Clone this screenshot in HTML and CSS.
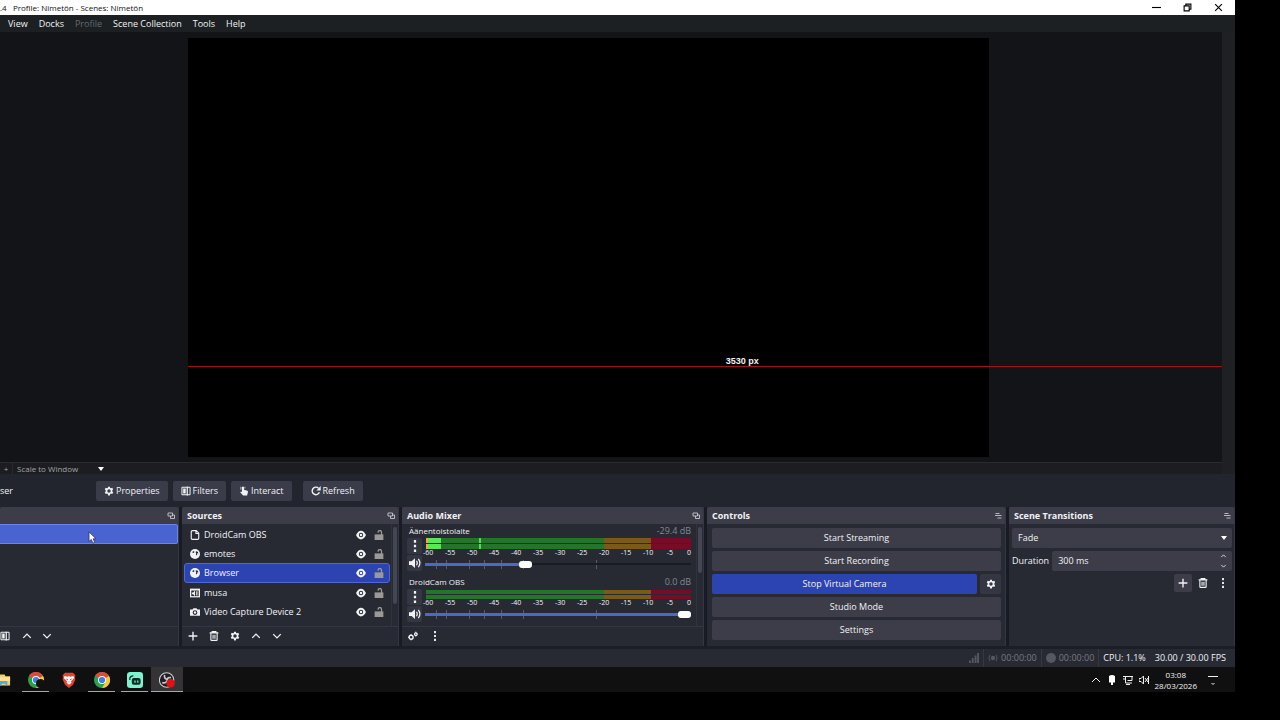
FILE: index.html
```html
<!DOCTYPE html>
<html lang="en">
<head>
<meta charset="utf-8">
<title>OBS Studio</title>
<link rel="stylesheet" href="styles.css">
</head>
<body>
<svg class="defs" aria-hidden="true">
  <symbol id="gear" viewBox="0 0 16 16"><path fill-rule="evenodd" fill="currentColor" d="M6.6 1h2.8l.5 2 1.2.6 2-.8 1.6 2.4-1.4 1.6v1.9l1.4 1.6-1.6 2.6-2-.8-1.3.7-.5 2.2H6.6l-.5-2.2-1.2-.7-2 .8-1.7-2.6 1.5-1.6V6.8L1.2 5.2l1.7-2.4 2 .8L6.1 3zM8 5.2a2.7 2.7 0 1 0 0 5.5 2.7 2.7 0 0 0 0-5.5z"/></symbol>
  <symbol id="filter" viewBox="0 0 16 16"><path fill="none" stroke="currentColor" stroke-width="1.6" d="M1.5 2h13v12h-13z"/><path fill="currentColor" d="M3.5 4h4v8h-4zM9 1h2v14H9z"/></symbol>
  <symbol id="hand" viewBox="0 0 16 16"><path fill="currentColor" d="M4.5 1.8Q6.2 0 8 1.8V6l5.5 1.6q1 .5.8 1.8L13 15H6.5L2 9.8l1-1.2 1.8 1zM2.5 1h1v5h-1zM9 1h1v3H9z"/></symbol>
  <symbol id="refresh" viewBox="0 0 16 16"><path fill="none" stroke="currentColor" stroke-width="2.2" d="M13.5 10A6 6 0 1 1 12 3.5"/><path fill="currentColor" d="M15.5 0v7H8.8z"/></symbol>
  <symbol id="float" viewBox="0 0 16 16"><path fill="none" stroke="currentColor" stroke-width="1.6" d="M2 2h9v6H2zM7 8v5h8V6h-4"/></symbol>
  <symbol id="float2" viewBox="0 0 16 16"><path fill="none" stroke="currentColor" stroke-width="1.6" d="M3 3h8M2 7h13M7 12h8"/></symbol>
  <symbol id="up" viewBox="0 0 16 16"><path fill="none" stroke="currentColor" stroke-width="2.2" d="M2 11l6-6 6 6"/></symbol>
  <symbol id="down" viewBox="0 0 16 16"><path fill="none" stroke="currentColor" stroke-width="2.2" d="M2 5l6 6 6-6"/></symbol>
  <symbol id="plus" viewBox="0 0 16 16"><path stroke="currentColor" stroke-width="2.2" d="M8 1v14M1 8h14"/></symbol>
  <symbol id="trash" viewBox="0 0 16 16"><path fill="none" stroke="currentColor" stroke-width="1.8" d="M1 3h14M5 3V1h6v2M3 3v11q0 1 1 1h8q1 0 1-1V3M6.5 6v6.500M9.500 6v6.500"/></symbol>
  <symbol id="dots" viewBox="0 0 16 16"><path fill="currentColor" d="M6.500 0h3v3.500h-3zM6.500 6.200h3v3.500h-3zM6.500 12.500h3V16h-3z"/></symbol>
  <symbol id="gears" viewBox="0 0 16 16"><circle cx="5" cy="10" r="3.200" fill="none" stroke="currentColor" stroke-width="2.200"/><circle cx="12.500" cy="5" r="2" fill="none" stroke="currentColor" stroke-width="2"/><path stroke="currentColor" stroke-width="1.500" d="M0 10h2M5 5v2M5 13v2M12.500 1v2M12.500 7v2M15 5h1"/></symbol>
  <symbol id="page" viewBox="0 0 16 16"><path fill="none" stroke="currentColor" stroke-width="1.800" d="M4 1h6l4 4v8q0 2-2 2H4q-2 0-2-2V3q0-2 2-2zM9.500 1.500v4h4"/></symbol>
  <symbol id="globe" viewBox="0 0 16 16"><circle cx="8" cy="8" r="8" fill="currentColor"/><path fill="#272a33" d="M4 4.500l2.500-1.500.5 2-1.500 1.500-1.500-.5zM9.500 3.500l3 1 1 2.500-1.500-.5-.7 3-1.300 1-.5-2.500.5-1.500-1-1z"/></symbol>
  <symbol id="media" viewBox="0 0 16 16"><path fill="currentColor" d="M0 1h16v14H0z"/><path fill="#272a33" d="M2 4h12v9H2z"/><path fill="currentColor" d="M3 7h2l3-3v9L5 10H3zM9.500 5h1.300v7H9.500zM12 5h1v7h-1z"/></symbol>
  <symbol id="camera" viewBox="0 0 16 16"><path fill="currentColor" fill-rule="evenodd" d="M0 4h4l1.500-2h5L12 4h4v10H0zM8 5a3.800 3.800 0 1 0 0 7.600A3.800 3.800 0 0 0 8 5z"/><circle cx="8" cy="8.800" r="1.900" fill="currentColor"/></symbol>
  <symbol id="eye" viewBox="0 0 16 16"><path fill="currentColor" fill-rule="evenodd" d="M0 8Q3.500 1 8 1T16 8q-3.500 7-8 7T0 8zm8-3.500a3.500 3.500 0 1 0 0 7 3.500 3.500 0 0 0 0-7z"/><circle cx="8" cy="8" r="2" fill="currentColor"/></symbol>
  <symbol id="lock" viewBox="0 0 16 16"><path fill="currentColor" d="M1 7h14v9H1z"/><path fill="none" stroke="currentColor" stroke-width="2" d="M12 8V3.500a2.700 2.700 0 0 0-5.400 0v1"/></symbol>
  <symbol id="speaker" viewBox="0 0 16 16"><path fill="currentColor" d="M0 5.500h3.500L8 1.500v13L3.500 10.500H0z"/><path fill="none" stroke="currentColor" stroke-width="1.700" d="M10 5q2 3 0 6M12.500 2.500q4 5.500 0 11"/></symbol>
  <symbol id="chrome" viewBox="0 0 20 20"><circle cx="10" cy="10" r="10" fill="#2da04c"/><path fill="#e0483a" d="M10 10L1.300 5A10 10 0 0 1 18.700 5z"/><path fill="#f7ca33" d="M10 10l8.700-5A10 10 0 0 1 10 20l3.500-6z"/><circle cx="10" cy="10" r="5" fill="#fff"/><circle cx="10" cy="10" r="3.900" fill="#3e7fe0"/></symbol>
</svg>

<main class="desktop">
  <header class="titlebar">
    <span>.4 &nbsp; Profile: Nimetön - Scenes: Nimetön</span>
    <div class="winbtns">
      <button aria-label="Minimize"><svg viewBox="0 0 8 8"><path d="M0 4h8"/></svg></button>
      <button aria-label="Restore"><svg viewBox="0 0 8 8"><path d="M1 2.500h4.500v4.500H1zM2.500 2.500V1H7v4.500H5.500"/></svg></button>
      <button aria-label="Close"><svg viewBox="0 0 8 8"><path d="M1 1l6 6M7 1L1 7"/></svg></button>
    </div>
  </header>
  <nav class="menu">
    <button>View</button><button>Docks</button><button disabled>Profile</button><button>Scene Collection</button><button>Tools</button><button>Help</button>
  </nav>

  <section class="preview">
    <div class="stage">
      <div class="canvas"></div>
      <div class="guide"><span>3530 px</span></div>
    </div>
  </section>
  <div class="scalebar"><button class="zoomin" aria-label="Zoom in">+</button><button class="scale">Scale to Window<i class="caret"></i></button></div>

  <div class="context">
    <span class="srcname">ser</span>
    <button><svg><use href="#gear"/></svg>Properties</button>
    <button><svg><use href="#filter"/></svg>Filters</button>
    <button><svg><use href="#hand"/></svg>Interact</button>
    <button class="apart"><svg><use href="#refresh"/></svg>Refresh</button>
  </div>

  <div class="docks">
    <section class="dock">
      <h2><span></span><svg><use href="#float"/></svg></h2>
      <div class="body scenes">
        <button class="scene" aria-label="Current scene"></button>
        <svg class="cursor" viewBox="0 0 10 15"><path fill="#fff" stroke="#1b2350" stroke-width=".8" d="M1 1v11l2.600-2.300L5.500 14l2-1-1.800-4H9z"/></svg>
      </div>
      <footer class="tools">
        <button aria-label="Filters"><svg><use href="#filter"/></svg></button><button aria-label="Up"><svg><use href="#up"/></svg></button><button aria-label="Down"><svg><use href="#down"/></svg></button>
      </footer>
    </section>

    <section class="dock">
      <h2><span>Sources</span><svg><use href="#float"/></svg></h2>
      <div class="body scroll">
        <ul class="sources">
          <li><svg><use href="#page"/></svg><span>DroidCam OBS</span><svg><use href="#eye"/></svg><svg class="lock"><use href="#lock"/></svg></li>
          <li><svg><use href="#globe"/></svg><span>emotes</span><svg><use href="#eye"/></svg><svg class="lock"><use href="#lock"/></svg></li>
          <li class="sel"><svg><use href="#globe"/></svg><span>Browser</span><svg><use href="#eye"/></svg><svg class="lock"><use href="#lock"/></svg></li>
          <li><svg><use href="#media"/></svg><span>musa</span><svg><use href="#eye"/></svg><svg class="lock"><use href="#lock"/></svg></li>
          <li><svg><use href="#camera"/></svg><span>Video Capture Device 2</span><svg><use href="#eye"/></svg><svg class="lock"><use href="#lock"/></svg></li>
        </ul>
        <div class="bar"><i class="thumb long"></i></div>
      </div>
      <footer class="tools src">
        <button aria-label="Add"><svg><use href="#plus"/></svg></button><button aria-label="Remove"><svg><use href="#trash"/></svg></button><button aria-label="Properties"><svg><use href="#gear"/></svg></button><button aria-label="Up"><svg><use href="#up"/></svg></button><button aria-label="Down"><svg><use href="#down"/></svg></button>
      </footer>
    </section>

    <section class="dock">
      <h2><span>Audio Mixer</span><svg><use href="#float"/></svg></h2>
      <div class="body scroll">
        <div class="channels">
          <div class="channel">
            <div class="chhead"><label for="v1">Äänentoistolaite</label><span>-29.4 dB</span></div>
            <div class="chbody">
              <div class="chbtns"><button aria-label="Options"><svg><use href="#dots"/></svg></button><button aria-label="Mute"><svg><use href="#speaker"/></svg></button></div>
              <div class="levels">
                <div class="meter live"><i></i><i></i></div>
                <div class="marks"><span>-60</span><span>-55</span><span>-50</span><span>-45</span><span>-40</span><span>-35</span><span>-30</span><span>-25</span><span>-20</span><span>-15</span><span>-10</span><span>-5</span><span>0</span></div>
                <input class="vol v1" id="v1" type="range" min="0" max="100" value="37">
              </div>
            </div>
          </div>
          <div class="channel">
            <div class="chhead"><label for="v2">DroidCam OBS</label><span>0.0 dB</span></div>
            <div class="chbody">
              <div class="chbtns"><button aria-label="Options"><svg><use href="#dots"/></svg></button><button aria-label="Mute"><svg><use href="#speaker"/></svg></button></div>
              <div class="levels">
                <div class="meter"><i></i><i></i></div>
                <div class="marks"><span>-60</span><span>-55</span><span>-50</span><span>-45</span><span>-40</span><span>-35</span><span>-30</span><span>-25</span><span>-20</span><span>-15</span><span>-10</span><span>-5</span><span>0</span></div>
                <input class="vol v2" id="v2" type="range" min="0" max="100" value="100">
              </div>
            </div>
          </div>
        </div>
        <div class="bar"><i class="thumb"></i></div>
      </div>
      <footer class="tools mix">
        <button aria-label="Advanced audio"><svg><use href="#gears"/></svg></button><button aria-label="More"><svg><use href="#dots"/></svg></button>
      </footer>
    </section>

    <section class="dock">
      <h2><span>Controls</span><svg><use href="#float2"/></svg></h2>
      <div class="body controls">
        <button>Start Streaming</button>
        <button>Start Recording</button>
        <div class="vcam"><button class="on">Stop Virtual Camera</button><button aria-label="Camera settings"><svg><use href="#gear"/></svg></button></div>
        <button>Studio Mode</button>
        <button>Settings</button>
      </div>
    </section>

    <section class="dock">
      <h2><span>Scene Transitions</span><svg><use href="#float2"/></svg></h2>
      <div class="body trans">
        <div class="field"><select aria-label="Transition"><option>Fade</option></select><i class="caret"></i></div>
        <div class="duration"><label for="dur">Duration</label>
          <div class="field"><input id="dur" type="text" value="300 ms"><span class="spin"><svg><use href="#up"/></svg><svg><use href="#down"/></svg></span></div>
        </div>
        <div class="tbtns"><button class="add" aria-label="Add"><svg><use href="#plus"/></svg></button><button aria-label="Remove"><svg><use href="#trash"/></svg></button><button aria-label="More"><svg><use href="#dots"/></svg></button></div>
      </div>
    </section>
  </div>

  <div class="status">
    <span class="dim"><svg viewBox="0 0 16 16"><path fill="currentColor" d="M0 12h3v4H0zM4.500 8h3v8h-3zM9 4h3v12H9zM13 0h3v16h-3z"/></svg></span>
    <span class="dim sep"><svg viewBox="0 0 16 16"><circle cx="8" cy="8" r="3.500" fill="currentColor"/><path fill="none" stroke="currentColor" stroke-width="1.500" d="M3 3q-3 5 0 10M13 3q3 5 0 10"/></svg>00:00:00</span>
    <span class="dim sep"><svg viewBox="0 0 16 16"><circle cx="8" cy="8" r="8" fill="currentColor"/></svg>00:00:00</span>
    <span class="sep">CPU: 1.1%</span>
    <span class="fps">30.00 / 30.00 FPS</span>
  </div>

  <div class="taskbar">
    <div class="apps">
      <button class="files" aria-label="File Explorer"><svg viewBox="0 0 12 16"><path fill="#f4cf69" d="M0 2h5l1 2h5v10H0z"/><path fill="#fbe49a" d="M0 5h11v4H0z"/><path fill="#5aa6e0" d="M0 9h8v5H6v-2H2v2H0z"/></svg></button>
      <button class="open" aria-label="Chrome profile"><svg><use href="#chrome"/></svg><i class="avatar"></i></button>
      <button aria-label="Brave"><svg viewBox="0 0 20 20"><path fill="#e5442c" d="M5 1h10l3 3-.5 3 .5 2-3 7-5 4-5-4-3-7 .5-2L2 4z"/><path fill="#fff" d="M4.500 5l4 .8L10 5l1.500.8 4-.8 1 2.500-4 4 .5 2L10 16l-3-2.500.5-2-4-4z"/><path fill="#e5442c" d="M6 8l3 1-1 1.500zM14 8l-3 1 1 1.500zM9 12h2l-1 1.500z"/></svg></button>
      <button class="open" aria-label="Chrome"><svg><use href="#chrome"/></svg></button>
      <button class="open" aria-label="Streamlabs"><svg viewBox="0 0 20 20"><rect width="20" height="20" rx="4" fill="#7cf5cf"/><rect x="6" y="7.500" width="11" height="8.500" rx="2.500" fill="#0c2a26"/><path fill="none" stroke="#0c2a26" stroke-width="1.500" d="M3.500 10V8.500Q3.500 5 8 4.800"/><path stroke="#7cf5cf" stroke-width="1.500" d="M10 10.500v3M13.500 10.500v3"/></svg></button>
      <button class="open active" aria-label="OBS Studio"><svg viewBox="0 0 20 20"><circle cx="9.500" cy="10" r="9" fill="#202024" stroke="#cfcfd2" stroke-width="1.300"/><path fill="none" stroke="#c8c8cc" stroke-width="2" d="M7 3.500q-1 4.500 3 5.500M4 13q5 2 6.500-3M15 7q-4-1-5 3"/><circle cx="14.500" cy="14" r="5.300" fill="#e01212"/></svg></button>
    </div>
    <div class="tray">
      <svg viewBox="0 0 10 10"><path d="M1 7l4-4 4 4"/></svg>
      <svg viewBox="0 0 10 10"><path fill="#fff" stroke="none" d="M2 1Q5-1 8 1v6.500H6V10H4V7.500H2z"/></svg>
      <svg viewBox="0 0 10 10"><path d="M0 1.500h10M2.500 1.500v6.500H9M0 4h2.500M4.500 5.500H9V1.500M3 9.500h4"/></svg>
      <svg viewBox="0 0 10 10"><path d="M0 3.500h2L4.500 1v8L2 6.500H0zM6 3l3 4M9 3L6 7M9.500 1v8"/></svg>
      <time>03:08<br>28/03/2026</time>
      <svg viewBox="0 0 10 10"><path d="M0 1.500h10M3.500 8L5 9.500 6.500 8"/></svg>
    </div>
  </div>
</main>
</body>
</html>
```
FILE: styles.css
```css
* { box-sizing: border-box; }
body {
  margin: 0;
  background: #000;
  color: #f2f2f5;
  font: 9px/12px "Open Sans", "Noto Sans", sans-serif;
}
button, input, select { font: inherit; color: inherit; border: 0; margin: 0; padding: 0; background: none; }
svg { display: block; flex: none; width: 10px; height: 10px; }
.defs { position: absolute; width: 0; height: 0; }

.desktop {
  display: flex;
  flex-direction: column;
  min-height: 100vh;
  padding: 0 45px 28px 0;
  overflow: hidden;
}

.titlebar { display: flex; justify-content: space-between; align-items: center; height: 15px; background: #fff; color: #111; font-size: 8px; }
.winbtns { display: flex; gap: 22px; padding-right: 12px; }
.winbtns svg { width: 9px; height: 9px; fill: none; stroke: #000; stroke-width: 1; }

.menu { display: flex; gap: 11px; height: 17px; padding-left: 8px; background: #1c2023; }
.menu button:disabled { color: #66686e; }

.preview { display: flex; flex: 1; min-height: 300px; padding-right: 13px; background: #1e2024; }
.stage {
  position: relative;
  display: grid;
  grid-template-columns: 188fr 801fr 233fr;
  flex: 1;
  padding: 6px 0 5px;
  background: #131418;
}
.canvas { grid-column: 2; background: #000; }
.guide { position: absolute; left: 15.4%; right: 0; top: 334px; height: 1px; background: #a01418; }
.guide span { position: absolute; left: 52%; bottom: 1px; font: bold 9px/10px "Liberation Sans", sans-serif; white-space: nowrap; }

.scalebar { display: flex; height: 12px; margin-right: 13px; border-top: 1px solid #292b30; background: #1b1d21; box-shadow: 13px 0 #1e2024; color: #a2a4aa; font-size: 8px; line-height: 10px; }
.zoomin { width: 13px; border-right: 1px solid #292b30; }
.scale { display: flex; align-items: center; justify-content: space-between; width: 91px; padding-left: 4px; }
.caret { width: 0; height: 0; border: 3px solid transparent; border-top: 4px solid #fff; border-bottom: 0; }

.context { display: flex; align-items: center; gap: 5px; height: 33px; background: #22252e; }
.srcname { width: 91px; }
.context button {
  display: flex;
  align-items: center;
  gap: 2px;
  height: 20px;
  padding: 0 8px;
  border-radius: 2px;
  background: #3a3c49;
}
.context .apart { margin-left: 6px; }

.docks {
  display: grid;
  grid-template-columns: 179fr 217fr 302fr 299fr 226fr;
  gap: 3px;
  height: 139px;
  background: #191b24;
}
.dock { display: flex; flex-direction: column; min-width: 0; background: #272a33; border-right: 1px solid #343743; }
.dock h2 {
  display: flex;
  justify-content: space-between;
  align-items: center;
  height: 17px;
  margin: 0;
  padding: 0 3px 0 5px;
  border-radius: 2px 2px 0 0;
  background: #3c3d49;
  font-size: 9px;
  font-weight: 700;
}
.dock h2 svg { width: 8px; height: 8px; color: #d8d8de; }
.body { position: relative; flex: 1; min-height: 0; }
.tools { display: flex; align-items: center; gap: 10px; height: 21px; padding-bottom: 3px; border-top: 1px solid #343743; }
.scenes + .tools button:first-child { margin-right: 2px; }
.tools.src { gap: 11px; padding-left: 6px; }
.tools.mix { gap: 12px; padding-left: 6px; }

.scene { display: block; width: 100%; height: 20px; border: 1px solid #6c84ea; border-left: 0; border-radius: 0 2px 2px 0; background: #4964d0; }
.cursor { position: absolute; left: 88px; top: 7px; width: 9px; height: 13px; }

.scroll { display: flex; overflow: hidden; }
.bar { width: 7px; padding: 3px 2px 0 1px; border-left: 1px solid #30333d; }
.thumb { display: block; width: 4px; height: 46px; border-radius: 2px; background: #434653; }
.thumb.long { height: 77px; }

.sources { flex: 1; margin: 0; padding: 1px 1px 0 2px; list-style: none; }
.sources li { display: flex; align-items: center; gap: 8px; height: 19px; padding: 0 5px; border: 1px solid transparent; }
.sources li.sel { height: 20px; border-color: #5068d0; border-radius: 3px; background: #2c44b2; }
.sources span { flex: 1; margin-left: -4px; white-space: nowrap; }
.sources .lock { color: #9b9996; }

.channels { flex: 1; padding: 0 1px 0 5px; }
.channel { height: 51px; }
.chhead { display: flex; justify-content: space-between; padding: 0 4px 0 2px; font-size: 8px; line-height: 14px; }
.chhead span { color: #85878f; font-size: 9px; }
.chbody { display: flex; gap: 3px; }
.chbtns { display: flex; flex-direction: column; gap: 1px; }
.chbtns button { display: grid; place-items: center; width: 15px; height: 16px; border-radius: 2px; background: #343742; }
.chbtns button svg { width: 12px; height: 12px; }
.levels { flex: 1; min-width: 0; padding-right: 4px; }
.meter { display: grid; gap: 1px; margin-left: 1px; padding-top: 1px; }
.meter i { height: 4px; background: linear-gradient(90deg, #24752a 67%, #7a5a18 67% 85%, #780c28 85%); }
.live { padding-top: 0; }
.live i {
  height: 5px;
  background:
    linear-gradient(#e0b050, #e0b050) 0 0 / 2px 100% no-repeat,
    linear-gradient(#58e858, #58e858) 2px 0 / 13px 100% no-repeat,
    linear-gradient(#50e050, #50e050) 53px 0 / 2px 100% no-repeat,
    linear-gradient(90deg, #24752a 67%, #7a5a18 67% 85%, #780c28 85%);
}
.marks { display: flex; justify-content: space-between; height: 8px; margin-left: -2px; font-size: 7px; line-height: 8px; }
.marks span { display: flex; justify-content: center; width: 10px; }
.marks span:last-child { justify-content: flex-end; width: 4px; }
.vol {
  appearance: none;
  display: block;
  width: 100%;
  height: 14px;
  background:
    linear-gradient(#4d69c4, #4d69c4) 0 6px / var(--fill) 3px no-repeat,
    linear-gradient(#191b24, #191b24) 0 6px / 100% 2px no-repeat,
    linear-gradient(90deg, transparent 11px, #555b70 11px 12px, transparent 12px 21px, #555b70 21px 22px, transparent 22px 44px, #555b70 44px 45px, transparent 45px 59px, #555b70 59px 60px, transparent 60px 76px, #555b70 76px 77px, transparent 77px 98px, #555b70 98px 99px, transparent 99px 171px, #555b70 171px 172px, transparent 172px) 0 3px / 100% 9px no-repeat;
}
.vol::-webkit-slider-thumb { appearance: none; width: 13px; height: 7px; margin-top: 1px; border-radius: 3px; background: #fff; }
.v1 { --fill: 37%; }
.v2 { --fill: 100%; }

.controls { display: flex; flex-direction: column; gap: 3px; padding: 4px 4px 0 5px; }
.controls button { height: 20px; flex: none; border-radius: 2px; background: #3c3d49; }
.vcam { display: flex; gap: 3px; }
.controls .vcam .on { flex: 1; background: #2c44b2; }
.vcam button:last-child { display: grid; place-items: center; width: 21px; background: #343641; }

.trans { display: flex; flex-direction: column; gap: 3px; padding: 4px 2px 0 3px; }
.field { position: relative; flex: 1; display: flex; align-items: center; height: 20px; padding: 0 5px 0 6px; border-radius: 2px; background: #3c3d49; }
.trans > .field { flex: none; }
.field select, .field input { appearance: none; flex: 1; width: 100%; min-width: 0; }
.duration { display: flex; align-items: center; gap: 3px; }
.spin { display: grid; gap: 4px; }
.spin svg { width: 7px; height: 6px; }
.tbtns { display: flex; justify-content: flex-end; gap: 2px; }
.tbtns button { display: grid; place-items: center; width: 18px; height: 18px; border-radius: 2px; }
.tbtns .add { background: #3c3d49; }

.status { display: flex; justify-content: flex-end; align-items: center; height: 21px; padding-right: 9px; border-top: 3px solid #1c1e27; background: #272a33; }
.status span { display: flex; align-items: center; gap: 3px; height: 18px; padding: 0 4px; white-space: nowrap; }
.status .sep { border-left: 1px solid #363944; }
.status .dim { color: #777a82; }
.status .dim svg { color: #555861; }
.status .fps { padding: 0 0 0 5px; }

.taskbar { display: flex; justify-content: space-between; height: 25px; background: #101011; }
.apps { display: flex; gap: 6px; }
.apps button { position: relative; display: grid; place-items: center; width: 27px; padding-top: 1px; border-bottom: 1px solid transparent; }
.apps svg { width: 16px; height: 16px; }
.apps .files { width: 11px; margin-right: 5px; }
.apps .files svg { width: 11px; }
.apps .open { border-color: #7eb4dc; }
.apps .active { width: 32px; margin-left: -3px; background: #343436; }
.avatar { position: absolute; right: 4px; bottom: 3px; width: 9px; height: 9px; border-radius: 50%; background: #14100e; }
.tray { display: flex; align-items: center; gap: 6px; padding-right: 17px; }
.tray svg { fill: none; stroke: #f0f0f0; stroke-width: 1; }
.tray time { margin-right: 5px; text-align: center; font-size: 8px; line-height: 11px; }
```
